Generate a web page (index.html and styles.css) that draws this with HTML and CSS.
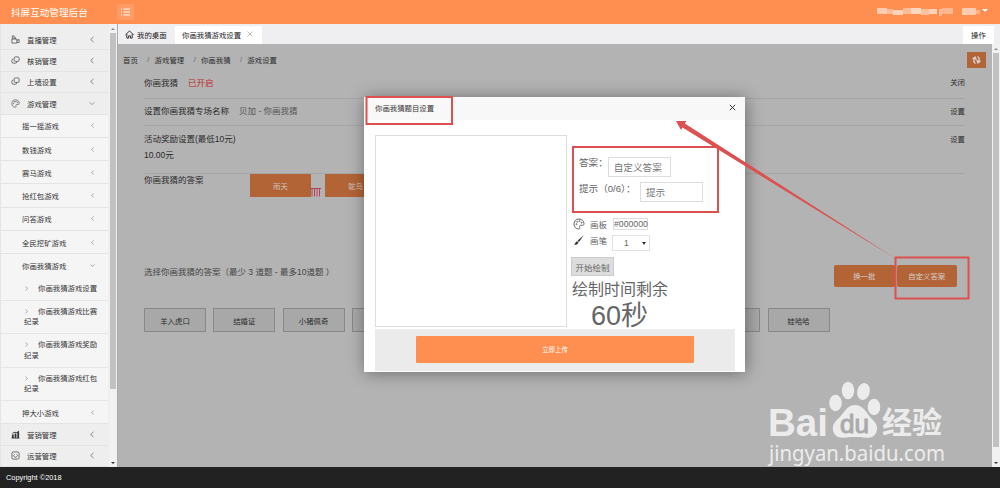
FILE: index.html
```
<!DOCTYPE html>
<html lang="zh-CN">
  <head>
    <meta charset="UTF-8" />
    <title>抖屏互动管理后台</title>
    <link rel="stylesheet" href="styles.css">
  </head>
  <body>
    <svg width="0" height="0" class="defs">
      <symbol id="left" viewBox="0 0 6 8"><path d="M4.7 1 1.5 4 4.7 7" /></symbol>
      <symbol id="right" viewBox="0 0 6 8"><path d="M1.5 1 4.5 4 1.5 7" /></symbol>
      <symbol id="down" viewBox="0 0 8 6"><path d="M1 1.5 4 4.5 7 1.5" /></symbol>
      <symbol id="copy" viewBox="0 0 10 10"><rect x="3.5" y="1" width="5.5" height="5" rx="1.3" /><path d="M2.5 3.2Q1 3.5 1 5v1.5Q1 8 2.5 8H5q1.5 0 1.5-2" /></symbol>
      <symbol id="palette" viewBox="0 0 12 12"><path d="M6 1C3 1 1 3.2 1 6s2 5 4.600 5c1.600 0 1.300-1.200 1-2-.3-1 .3-1.700 1.200-1.700h1.700C10.500 7.300 11 6.700 11 5.700 11 3 8.800 1 6 1z" /><circle cx="3.4" cy="6.2" r=".5" /><circle cx="4.3" cy="3.8" r=".5" /><circle cx="6.6" cy="3.1" r=".5" /><circle cx="8.7" cy="4.7" r=".5" /></symbol>
    </svg>

    <header>
      <h1>抖屏互动管理后台</h1>
      <span class="toggle"><svg width="10" height="8"><path d="M0 1h1M2.5 1H9M0 4h1M2.5 4H9M0 7h1M2.5 7H9" /></svg></span>
      <div class="user">
        <svg width="112" height="12">
          <g fill="#fff">
            <rect x="0" y="2" width="10" height="6" opacity=".55" />
            <rect x="10" y="3" width="6" height="5" opacity=".4" />
            <rect x="16" y="4" width="10" height="5" opacity=".6" />
            <rect x="26" y="2" width="8" height="6" opacity=".4" />
            <rect x="34" y="2" width="10" height="6" opacity=".65" />
            <rect x="44" y="3" width="8" height="6" opacity=".45" />
            <rect x="52" y="3" width="8" height="5" opacity=".6" />
            <rect x="62" y="3" width="3" height="7" opacity=".4" />
            <rect x="65" y="2" width="11" height="6" opacity=".35" />
            <rect x="85" y="2" width="14" height="7" opacity=".55" />
            <rect x="99" y="4" width="4" height="4" opacity=".3" />
            <path d="M105 3h6l-3 3z" />
          </g>
        </svg>
      </div>
    </header>

    <div class="main">
      <aside>
        <nav>
          <div class="item"><svg class="ico" viewBox="0 0 10 10"><path d="M1 4.5h5.5V9H1zM6.5 6l2.500-1v3.500L6.500 8M1.500 1h2v3.500M1.500 1v3.500M5 2.500v2" /></svg>直播管理<svg class="arrow"><use href="#left" /></svg></div>
          <div class="item"><svg class="ico"><use href="#copy" /></svg>核销管理<svg class="arrow"><use href="#left" /></svg></div>
          <div class="item"><svg class="ico"><use href="#copy" /></svg>上墙设置<svg class="arrow"><use href="#left" /></svg></div>
          <div class="item"><svg class="ico"><use href="#palette" /></svg>游戏管理<svg class="arrow"><use href="#down" /></svg></div>
          <div class="sub">摇一摇游戏<svg class="arrow"><use href="#left" /></svg></div>
          <div class="sub">数钱游戏<svg class="arrow"><use href="#left" /></svg></div>
          <div class="sub">赛马游戏<svg class="arrow"><use href="#left" /></svg></div>
          <div class="sub">抢红包游戏<svg class="arrow"><use href="#left" /></svg></div>
          <div class="sub">问答游戏<svg class="arrow"><use href="#left" /></svg></div>
          <div class="sub">全民挖矿游戏<svg class="arrow"><use href="#left" /></svg></div>
          <div class="sub open">你画我猜游戏<svg class="arrow"><use href="#down" /></svg></div>
          <div class="leaf one"><svg><use href="#right" /></svg>你画我猜游戏设置</div>
          <div class="leaf"><svg><use href="#right" /></svg>你画我猜游戏比赛<br>纪录</div>
          <div class="leaf"><svg><use href="#right" /></svg>你画我猜游戏奖励<br>纪录</div>
          <div class="leaf"><svg><use href="#right" /></svg>你画我猜游戏红包<br>纪录</div>
          <div class="sub">押大小游戏<svg class="arrow"><use href="#left" /></svg></div>
          <div class="item"><svg class="ico solid" viewBox="0 0 10 10"><path d="M1 5h2v4H1zM4 4h2v5H4zM7 2h2v7H7zM1 3.500 4 2l2 .5L9 .5v1L6 3.300 4 3 1 4.300zM.5 8.500h9v1h-9z" /></svg>营销管理<svg class="arrow"><use href="#left" /></svg></div>
          <div class="item"><svg class="ico" viewBox="0 0 10 10"><rect x="1" y="1" width="8" height="8" rx="1.5" /><path d="M3 3l1 1M7 3 6 4M3 6q2 2 4 0M2 5h1M7 5h1" /></svg>运营管理<svg class="arrow"><use href="#left" /></svg></div>
        </nav>
        <div class="scroll side-scroll"><i class="up"></i><b></b><i class="dn"></i></div>
      </aside>

      <section class="page">
        <div class="tabs">
          <span class="tab home"><svg width="9" height="9" viewBox="0 0 10 10"><path d="M.5 5.500 5 1l4.500 4.500M2 4.500V9h2V6.500h2V9h2V4.500" /></svg>我的桌面</span>
          <span class="tab active">你画我猜游戏设置<svg width="6" height="6"><path d="M.5.5l5 5M5.500.5l-5 5" /></svg></span>
          <span class="tab action">操作</span>
        </div>
        <div class="view">
          <div class="content">
            <div class="crumbs">
              <span>首页</span><i>/</i><span>游戏管理</span><i>/</i><span>你画我猜</span><i>/</i><span>游戏设置</span>
              <button class="refresh"><svg width="11" height="10" viewBox="0 0 11 10"><path d="M4.500 8.500Q1.500 6.500 3.800 2.500M1.500 4l2.600-1.800L5.200 5M6.500 1.500Q9.500 3.500 7.200 7.500M9.500 6 6.900 7.800 5.800 5" /></svg></button>
            </div>
            <div class="row r1"><span>你画我猜</span><em class="on">已开启</em><a>关闭</a></div>
            <div class="row r2"><span>设置你画我猜专场名称</span><em>贝加 - 你画我猜</em><a>设置</a></div>
            <div class="row r3"><p>活动奖励设置(最低10元)<br>10.00元</p><a>设置</a></div>
            <div class="picked">
              <span>你画我猜的答案</span>
              <button>雨天</button>
              <svg class="trash" width="11" height="11"><path d="M0 2.500h11M2 2.500v8M4.500 2.500v8M7 2.500v8M9.500 2.500v8" /></svg>
              <button>鸵鸟</button>
            </div>
            <div class="choose">
              <span>选择你画我猜的答案（最少 3 道题 - 最多10道题 ）</span>
              <button>换一批</button><button>自定义答案</button>
            </div>
            <div class="words">
              <button>羊入虎口</button><button>结婚证</button><button>小猪佩奇</button><button></button><button></button><button></button><button></button><button></button><button></button><button>娃哈哈</button>
            </div>
          </div>
          <div class="scroll"><i class="up"></i><b></b><i class="dn"></i></div>
        </div>
      </section>
    </div>
    <footer>Copyright ©2018</footer>

    <div class="modal">
      <div class="modal-head">你画我猜题目设置<svg width="7" height="7"><path d="M.8.8l5.400 5.400M6.200.8.8 6.200" /></svg></div>
      <div class="modal-body">
        <div class="board"></div>
        <div class="tools">
          <div class="field answer"><label>答案：</label><input type="text" placeholder="自定义答案" /></div>
          <div class="field hint"><label>提示（0/6）：</label><input type="text" placeholder="提示" /></div>
          <div class="tool"><svg width="12" height="12"><use href="#palette" /></svg><span>画板</span><b class="color">#000000</b></div>
          <div class="tool brush"><svg width="12" height="12"><path class="fill" d="M10.800 1 6 8 4.500 6.700zM4 7.200l1.500 1.300C5 10.500 3 11 1 10.800 2.500 10 2 7.800 4 7.200z" /></svg><span>画笔</span><b class="size">1<i></i></b></div>
          <button class="start">开始绘制</button>
          <div class="left-time">绘制时间剩余</div>
          <div class="seconds">60秒</div>
        </div>
      </div>
      <div class="modal-foot"><button>立即上传</button></div>
    </div>

    <svg class="marks" width="1000" height="488">
      <g fill="none" stroke="#dc5050" stroke-width="2">
        <rect x="366.5" y="97" width="85.5" height="27" />
        <rect x="573" y="147" width="145" height="65" />
        <rect x="895.5" y="257.5" width="73" height="41" />
      </g>
      <path fill="#dc5050" d="M676 121 686.500 121 684.800 123.500 897 259.500 682.500 127.500 681 130z" />
      <g class="logo">
        <text x="768" y="436" font-size="38" font-weight="700" textLength="60" lengthAdjust="spacingAndGlyphs">Bai</text>
        <ellipse cx="835.5" cy="403" rx="6.3" ry="8.3" />
        <ellipse cx="848" cy="390.5" rx="6.2" ry="8.8" />
        <ellipse cx="863.5" cy="391.5" rx="6.3" ry="8.5" transform="rotate(12 863.500 391.500)" />
        <ellipse cx="874" cy="407" rx="6.3" ry="8.3" />
        <path d="M855 405c8 0 11 7 16 13 5 5 8 9 5 15-3 6-10 5-16 4h-10c-6 1-13 2-16-4-3-6 0-11 5-15 5-5 8-13 16-13z" />
        <text class="du" x="840" y="433" font-size="25" textLength="29" lengthAdjust="spacingAndGlyphs">du</text>
        <text class="cn" x="882" y="433" font-size="30" font-weight="700">经验</text>
        <text class="url" x="769" y="461" font-size="21" textLength="176" lengthAdjust="spacingAndGlyphs">jingyan.baidu.com</text>
      </g>
    </svg>
  </body>
</html>
```
FILE: styles.css
```
* {
  box-sizing: border-box;
}
body {
  margin: 0;
  width: 1000px;
  height: 488px;
  overflow: hidden;
  font-family: "Liberation Sans", "Noto Sans CJK SC", sans-serif;
  font-size: 7.4px;
  color: #333;
}
button {
  padding: 0;
  border: none;
  font: inherit;
  color: inherit;
}
svg {
  fill: none;
  stroke: currentColor;
  flex: none;
}
em,
i {
  font-style: normal;
}
.defs {
  position: absolute;
}
header {
  display: flex;
  align-items: center;
  height: 24px;
  padding-left: 11px;
  background-color: #ff8f50;
  color: #fff;
}
h1 {
  width: 106px;
  margin: 0;
  font-size: 9.6px;
  font-weight: normal;
}
.toggle {
  display: flex;
  align-items: center;
  justify-content: center;
  width: 17px;
  height: 16px;
  background-color: #ff9c66;
}
.user {
  margin-left: auto;
  margin-right: 11px;
  height: 12px;
}
.user svg {
  display: block;
  stroke: none;
}
.main {
  display: flex;
  height: 443px;
}
aside {
  display: flex;
  width: 118px;
  background-color: #eee;
  border-right: 1px solid #aaa;
}
nav {
  width: 108px;
  padding-top: 5px;
  border-left: 1px solid #e4e4e4;
}
.item,
.sub {
  display: flex;
  align-items: center;
  height: 21.4px;
  padding-left: 10px;
  padding-right: 13px;
  border-bottom: 1px solid #e3e3e3;
}
.ico {
  width: 9px;
  height: 9px;
  margin-right: 7px;
  stroke: #555;
  stroke-width: 0.9;
}
.solid {
  fill: #333;
  stroke: none;
}
.arrow {
  width: 6px;
  height: 7px;
  margin-left: auto;
  stroke: #777;
}
.sub {
  height: 23.3px;
  padding-left: 21px;
  background-color: #f5f5f5;
}
.sub .arrow {
  width: 5px;
  height: 5px;
}
.open {
  border-bottom: none;
}
.leaf {
  height: 33.4px;
  padding: 6px 0 0 23px;
  background-color: #f5f5f5;
  border-bottom: 1px solid #e6e6e6;
  line-height: 10.5px;
}
.leaf svg {
  width: 5px;
  height: 5px;
  margin-right: 9px;
  stroke: #777;
}
.one {
  height: 23.3px;
}
.scroll {
  display: flex;
  flex-direction: column;
  align-items: center;
  width: 8px;
  padding: 4px 0 3px;
  background-color: #f1f1f1;
}
.scroll b {
  width: 6px;
  height: 394px;
  margin-top: 3px;
  background-color: #c1c1c1;
}
.side-scroll b {
  height: 356px;
}
.side-scroll {
  margin-left: auto;
}
.up {
  border: 2px solid transparent;
  border-top: none;
  border-bottom-color: #888;
}
.dn {
  margin-top: auto;
  border: 2px solid transparent;
  border-bottom: none;
  border-top-color: #333;
}
.page {
  flex: 1;
}
.tabs {
  display: flex;
  height: 20px;
  padding: 2px 6px 0 0;
  background-color: #efeef0;
  color: #222;
}
.tab {
  display: flex;
  align-items: center;
  height: 18px;
  padding-bottom: 2px;
}
.home {
  width: 57px;
  padding-left: 7px;
}
.home svg {
  margin-right: 3px;
}
.active {
  width: 87px;
  padding-left: 7px;
  background-color: #fff;
}
.active svg {
  margin-left: 6px;
  stroke: #bbb;
}
.action {
  justify-content: center;
  width: 31px;
  margin-left: auto;
  background-color: #fff;
}
.view {
  display: flex;
  height: 423px;
}
.content {
  width: 874px;
  padding: 7px 27px 0 26px;
  background-color: #b3b3b3;
  color: #2a2a2a;
}
.crumbs {
  display: flex;
  align-items: center;
  height: 17px;
  margin: 0 -21px;
}
.crumbs i {
  width: 16.8px;
  padding-left: 9.5px;
  color: #666;
}
.refresh {
  width: 19px;
  height: 16px;
  margin-left: auto;
  background-color: #b36437;
  color: #d8d0cc;
}
.refresh svg {
  display: block;
  margin: auto;
  stroke-width: 1.4;
}
.row {
  display: flex;
  align-items: center;
  border-bottom: 1px solid #a6a6a6;
  font-size: 8.5px;
}
.row em {
  margin-left: 10px;
  color: #555;
}
.row .on {
  color: #c12a2a;
}
.row a {
  margin-left: auto;
  font-size: 7.4px;
}
.r1 {
  height: 31px;
  padding-bottom: 3px;
}
.r2 {
  height: 27px;
  padding-bottom: 4px;
}
.r3 {
  height: 47.5px;
  align-items: flex-start;
  padding-top: 6px;
}
.row p {
  margin: 0;
  line-height: 15.5px;
}
.r3 a {
  padding-top: 1px;
}
.picked {
  display: flex;
  height: 90px;
  font-size: 8.5px;
}
.picked span {
  width: 106px;
  line-height: 12px;
}
.picked button {
  width: 61px;
  height: 23px;
  background-color: #b36437;
  color: #c9c4c0;
  font-size: 7.4px;
}
.trash {
  margin: 12px 4px 0 -1px;
  stroke: #b84058;
}
.choose {
  display: flex;
  align-items: center;
  height: 22px;
  margin-top: 1px;
  padding-right: 8px;
  font-size: 8.5px;
  color: #444;
}
.choose button {
  width: 60.5px;
  height: 22px;
  margin-left: 2px;
  border-radius: 2px;
  background-color: #b36437;
  color: #d4d0cc;
  font-size: 7.4px;
}
.choose span {
  margin-right: auto;
  padding-bottom: 9px;
}
.words {
  display: flex;
  gap: 7.3px;
  margin-top: 21.5px;
}
.words button {
  width: 62px;
  height: 24px;
  border: 1px solid #888;
  background-color: #a8a8a8;
}
footer {
  height: 21px;
  padding-left: 6px;
  background-color: #222;
  color: #fff;
  font-size: 7.4px;
  line-height: 21px;
}

.modal {
  position: absolute;
  left: 364px;
  top: 97px;
  width: 381px;
  height: 275px;
  background-color: #fff;
  box-shadow: 1px 1px 16px rgba(0, 0, 0, 0.4);
  color: #666;
}
.modal-head {
  display: flex;
  align-items: center;
  justify-content: space-between;
  height: 23px;
  padding: 0 9px 2px 11px;
  background-color: #f8f8f8;
  color: #333;
}
.modal-body {
  display: flex;
  height: 209px;
  padding: 15px 0 0 11px;
}
.board {
  width: 192px;
  height: 192px;
  border: 1px solid #ddd;
}
.tools {
  width: 160px;
  padding: 21px 0 0 4px;
}
.field {
  display: flex;
  padding-left: 8px;
  font-size: 9.6px;
}
/* full-width colon and brackets sit centred */
.field label {
  font-family: "Liberation Sans", "Noto Sans CJK TC", sans-serif;
  line-height: 14px;
}
.field input {
  width: 63px;
  height: 20px;
  padding: 0 5px;
  border: 1px solid #ddd;
  font: inherit;
}
.field input::placeholder {
  color: #757575;
}
.answer {
  height: 26px;
}
.answer input {
  margin-top: 1px;
}
.hint {
  height: 36px;
}
.hint label {
  width: 61px;
  white-space: nowrap;
}
.tool {
  display: flex;
  align-items: center;
  height: 12px;
  padding-left: 2px;
  font-size: 8.5px;
}
.tool svg {
  margin-right: 5px;
}
.tool span {
  width: 23px;
}
.tool b {
  font-weight: normal;
}
.tool .fill {
  fill: #333;
  stroke: none;
}
.color {
  width: 35px;
  height: 12px;
  border: 1px solid #ddd;
  font-size: 8.7px;
  line-height: 11px;
}
.brush {
  height: 23px;
}
.brush svg,
.brush span {
  margin-bottom: 4px;
}
.size {
  display: flex;
  align-items: center;
  justify-content: space-between;
  width: 38px;
  height: 16px;
  margin: 3px 0 0 -1px;
  padding: 0 3px 0 11px;
  border: 1px solid #e2e2e2;
}
.size i {
  border: 2px solid transparent;
  border-top: 3px solid #333;
  border-bottom: none;
}
.start {
  display: block;
  width: 43px;
  height: 19px;
  margin-top: 4px;
  border: 1px solid #ccc;
  background-color: #ddd;
  font-size: 8.5px;
}
.left-time {
  margin-left: 1px;
  font-size: 16px;
  line-height: 27px;
}
.seconds {
  margin-left: 20px;
  font-size: 27px;
  line-height: 26px;
}
.modal-foot {
  height: 42px;
  margin: 0 10px 0 11px;
  padding-top: 7px;
  background-color: #ebebeb;
}
.modal-foot button {
  display: block;
  width: 278px;
  height: 27px;
  margin-left: 41px;
  border-radius: 1px;
  background-color: #ff8f50;
  color: #fff;
  font-size: 6.4px;
}

.marks {
  position: absolute;
  left: 0;
  top: 0;
  stroke: none;
}
.logo {
  fill: #ececec;
}
.logo .du {
  fill: #aaa;
  stroke: #aaa;
}
.cn {
  font-family: "Noto Sans CJK SC", sans-serif;
}
.url {
  font-family: "Noto Sans", sans-serif;
}
```
